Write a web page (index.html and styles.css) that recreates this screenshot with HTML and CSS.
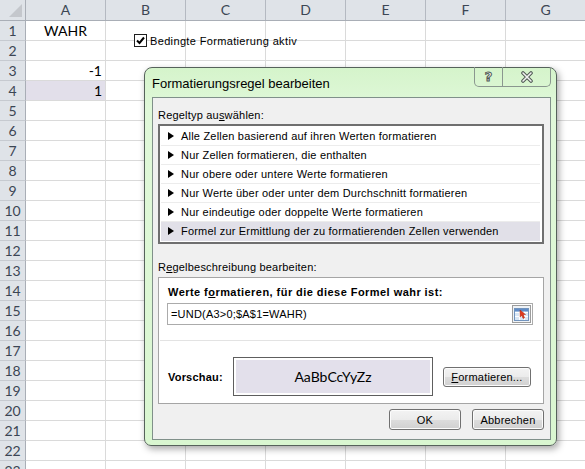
FILE: index.html
```html
<!DOCTYPE html>
<html lang="de">
<head>
<meta charset="utf-8">
<title>Formatierungsregel bearbeiten</title>
<link rel="stylesheet" href="styles.css">
</head>
<body>
<div class="app">
  <div class="sheet">
    <div class="colhead">
      <div class="corner"><span class="tri"></span></div>
      <div class="ch">A</div><div class="ch">B</div><div class="ch">C</div><div class="ch">D</div><div class="ch">E</div><div class="ch">F</div><div class="ch">G</div>
    </div>
    <div class="row"><div class="rh">1</div><div class="ca center">WAHR</div><div class="rest"></div></div>
    <div class="row"><div class="rh">2</div><div class="ca"></div><div class="rest"></div></div>
    <div class="row"><div class="rh">3</div><div class="ca right">-1</div><div class="rest"></div></div>
    <div class="row"><div class="rh">4</div><div class="ca right hl">1</div><div class="rest"></div></div>
    <div class="row"><div class="rh">5</div><div class="ca"></div><div class="rest"></div></div>
    <div class="row"><div class="rh">6</div><div class="ca"></div><div class="rest"></div></div>
    <div class="row"><div class="rh">7</div><div class="ca"></div><div class="rest"></div></div>
    <div class="row"><div class="rh">8</div><div class="ca"></div><div class="rest"></div></div>
    <div class="row"><div class="rh">9</div><div class="ca"></div><div class="rest"></div></div>
    <div class="row"><div class="rh">10</div><div class="ca"></div><div class="rest"></div></div>
    <div class="row"><div class="rh">11</div><div class="ca"></div><div class="rest"></div></div>
    <div class="row"><div class="rh">12</div><div class="ca"></div><div class="rest"></div></div>
    <div class="row"><div class="rh">13</div><div class="ca"></div><div class="rest"></div></div>
    <div class="row"><div class="rh">14</div><div class="ca"></div><div class="rest"></div></div>
    <div class="row"><div class="rh">15</div><div class="ca"></div><div class="rest"></div></div>
    <div class="row"><div class="rh">16</div><div class="ca"></div><div class="rest"></div></div>
    <div class="row"><div class="rh">17</div><div class="ca"></div><div class="rest"></div></div>
    <div class="row"><div class="rh">18</div><div class="ca"></div><div class="rest"></div></div>
    <div class="row"><div class="rh">19</div><div class="ca"></div><div class="rest"></div></div>
    <div class="row"><div class="rh">20</div><div class="ca"></div><div class="rest"></div></div>
    <div class="row"><div class="rh">21</div><div class="ca"></div><div class="rest"></div></div>
    <div class="row"><div class="rh">22</div><div class="ca"></div><div class="rest"></div></div>
    <div class="row"><div class="rh">23</div><div class="ca"></div><div class="rest"></div></div>
  </div>

  <label class="cb">
    <span class="cb-box">
      <svg width="11" height="11" viewBox="0 0 11 11"><path d="M2 5.5 L4.5 8 L9 2.5" fill="none" stroke="#000" stroke-width="2"/></svg>
    </span>
    <span>Bedingte Formatierung aktiv</span>
  </label>

  <div class="dialog">
    <div class="titlebar">
      <div class="title">Formatierungsregel bearbeiten</div>
      <div class="tbtns">
        <div class="tb help"><span class="qmark">?</span></div>
        <div class="tb close">
          <svg width="14" height="12" viewBox="0 0 14 12"><path d="M3 2 L11 10 M11 2 L3 10" stroke="#505a55" stroke-width="3.6" stroke-linecap="round"/><path d="M3 2 L11 10 M11 2 L3 10" stroke="#f2f2f2" stroke-width="1.6" stroke-linecap="round"/></svg>
        </div>
      </div>
    </div>
    <div class="content">
      <div class="label first">Regeltyp au<u>s</u>wählen:</div>
      <div class="list">
        <div class="item"><svg class="arr" width="6" height="8" viewBox="0 0 6 8"><path d="M0 0 L6 4 L0 8 Z"/></svg>Alle Zellen basierend auf ihren Werten formatieren</div>
        <div class="item"><svg class="arr" width="6" height="8" viewBox="0 0 6 8"><path d="M0 0 L6 4 L0 8 Z"/></svg>Nur Zellen formatieren, die enthalten</div>
        <div class="item"><svg class="arr" width="6" height="8" viewBox="0 0 6 8"><path d="M0 0 L6 4 L0 8 Z"/></svg>Nur obere oder untere Werte formatieren</div>
        <div class="item"><svg class="arr" width="6" height="8" viewBox="0 0 6 8"><path d="M0 0 L6 4 L0 8 Z"/></svg>Nur Werte über oder unter dem Durchschnitt formatieren</div>
        <div class="item"><svg class="arr" width="6" height="8" viewBox="0 0 6 8"><path d="M0 0 L6 4 L0 8 Z"/></svg>Nur eindeutige oder doppelte Werte formatieren</div>
        <div class="item sel"><svg class="arr" width="6" height="8" viewBox="0 0 6 8"><path d="M0 0 L6 4 L0 8 Z"/></svg>Formel zur Ermittlung der zu formatierenden Zellen verwenden</div>
      </div>
      <div class="label second">R<u>e</u>gelbeschreibung bearbeiten:</div>
      <div class="desc">
        <div class="heading">Werte f<u>o</u>rmatieren, für die diese Formel wahr ist:</div>
        <div class="formula">
          <span class="ftext">=UND(A3&gt;0;$A$1=WAHR)</span>
          <span class="refbtn">
            <svg width="15" height="13" viewBox="0 0 15 13">
              <rect x="0.5" y="0.5" width="14" height="12" fill="#d9e6f4" stroke="#7193bd"/>
              <path d="M1 4.5h13M1 8.5h13M5.5 1v11M10.5 1v11" stroke="#ffffff"/>
              <rect x="1" y="1" width="13" height="2.5" fill="#5f8cc7"/>
              <path d="M6 2 L11.5 6.5 L9.2 6.8 L10.6 9.8 L9.1 10.5 L7.8 7.5 L6.2 9 Z" fill="#e2391c" stroke="#a52410" stroke-width="0.5"/>
            </svg>
          </span>
        </div>
        <div class="sep"></div>
        <div class="preview-row">
          <div class="pv-label">Vorschau:</div>
          <div class="preview"><div class="pv-fill">AaBbCcYyZz</div></div>
          <button class="btn fmt" type="button"><u>F</u>ormatieren...</button>
        </div>
      </div>
      <div class="footer">
        <button class="btn" type="button">OK</button>
        <button class="btn" type="button">Abbrechen</button>
      </div>
    </div>
  </div>
</div>
</body>
</html>
```

FILE: styles.css
```css
* { box-sizing: border-box; }

html, body {
  margin: 0;
  padding: 0;
  background: #ffffff;
}

.app {
  position: relative;
  width: 585px;
  height: 469px;
  overflow: hidden;
  font-family: "Liberation Sans", Arial, sans-serif;
}

/* ---------- spreadsheet ---------- */
.sheet {
  width: 586px;
}

.colhead {
  display: grid;
  grid-template-columns: 26px repeat(7, 80px);
  height: 21px;
  background: #dfe3e8;
  border-bottom: 1px solid #a9aeb6;
}

.corner {
  position: relative;
  border-right: 1px solid #a9aeb6;
}

.tri {
  position: absolute;
  right: 3px;
  bottom: 3px;
  width: 0;
  height: 0;
  border-left: 13px solid transparent;
  border-bottom: 13px solid #c4c7cc;
}

.ch {
  border-right: 1px solid #b4b9c1;
  font-family: Lato, "Liberation Sans", sans-serif;
  font-size: 14px;
  line-height: 20px;
  color: #3c4654;
  text-align: center;
}

.row {
  display: grid;
  grid-template-columns: 26px 80px 1fr;
  height: 20px;
}

.rh {
  background: #dfe3e8;
  border-right: 1px solid #a9aeb6;
  border-bottom: 1px solid #c6cad0;
  font-family: Lato, "Liberation Sans", sans-serif;
  font-size: 14px;
  line-height: 19px;
  color: #3c4654;
  text-align: center;
}

.ca {
  border-right: 1px solid #dadada;
  border-bottom: 1px solid #dadada;
  font-family: Lato, "Liberation Sans", sans-serif;
  font-size: 14px;
  line-height: 19px;
  color: #000;
  padding: 0 3px;
}

.ca.center { text-align: center; }
.ca.right { text-align: right; }
.ca.hl { background: #e2dfea; }

.rest {
  border-bottom: 1px solid #dadada;
  background-image: repeating-linear-gradient(to right, transparent 0 79px, #dadada 79px 80px);
}

/* ---------- floating checkbox control ---------- */
.cb {
  position: absolute;
  left: 134px;
  top: 34px;
  display: flex;
  align-items: center;
  gap: 3px;
  font-size: 11px;
  letter-spacing: 0.35px;
  color: #000;
}

.cb-box {
  width: 13px;
  height: 13px;
  border: 1px solid #1e1e1e;
  background: #fff;
  display: flex;
  align-items: center;
  justify-content: center;
}

/* ---------- dialog window ---------- */
.dialog {
  position: absolute;
  left: 144px;
  top: 67px;
  width: 413px;
  height: 379px;
  display: flex;
  flex-direction: column;
  padding: 0 5px 5px 7px;
  border: 1px solid #56625b;
  border-radius: 8px 8px 7px 7px;
  background: linear-gradient(to bottom, #d5f4cb 0, #e0f8d9 40px, #d9f6d0 100%);
  box-shadow: 2px 3px 7px rgba(0, 0, 0, 0.35);
}

.titlebar {
  height: 29px;
  display: flex;
  justify-content: space-between;
  align-items: flex-start;
}

.title {
  font-size: 13px;
  line-height: 31px;
  color: #000;
}

.tbtns {
  display: flex;
  height: 20px;
  margin-top: -1px;
  border: 1px solid #8a978f;
  border-top: none;
  border-radius: 0 0 5px 5px;
}

.tb {
  display: flex;
  align-items: center;
  justify-content: center;
}

.tb.help {
  width: 28px;
  border-right: 1px solid #8a978f;
}

.tb.close {
  width: 47px;
}

.qmark {
  font-family: "DejaVu Sans", sans-serif;
  font-weight: bold;
  font-size: 13px;
  line-height: 13px;
  color: #f2f2f2;
  -webkit-text-stroke: 1px #505a55;
}

.content {
  flex: 1;
  border: 1px solid #80908a;
  background: #f0f0f0;
  padding: 0 6px 0 5px;
  font-size: 11px;
  letter-spacing: 0.2px;
  color: #000;
}

.label {
  line-height: 14px;
}

.label.first { margin-top: 10px; }
.label.second { margin-top: 16px; }

.list {
  margin-top: 2px;
  height: 120px;
  border: 2px solid #6f6f6f;
  background: #fff;
  padding: 1px 2px 1px 1px;
}

.item {
  height: 19px;
  display: flex;
  align-items: center;
  gap: 7px;
  padding-left: 7px;
  border-bottom: 1px solid #ececec;
  white-space: nowrap;
}

.item.sel {
  background: #e1e0e8;
  border-bottom-color: #e1e0e8;
}

.arr { fill: #000; flex: none; }

.desc {
  margin-top: 3px;
  height: 127px;
  border: 1px solid #a5a5a5;
  background: #fff;
  padding: 7px 10px 6px 9px;
}

.heading {
  font-weight: bold;
  line-height: 14px;
  letter-spacing: 0.45px;
  white-space: nowrap;
}

.formula {
  margin: 4px 0 0 -1px;
  height: 22px;
  border: 1px solid #ababab;
  display: flex;
  align-items: center;
  justify-content: space-between;
  padding: 0 1px 0 3px;
}

.refbtn {
  width: 19px;
  height: 18px;
  border: 1px solid #9c9c9c;
  background: #eef2f6;
  display: flex;
  align-items: center;
  justify-content: center;
}

.sep {
  margin: 15px -8px 0 -8px;
  height: 1px;
  background: #e3e3e3;
}

.preview-row {
  margin-top: 16px;
  display: flex;
  align-items: center;
}

.pv-label {
  width: 65px;
  font-weight: bold;
}

.preview {
  width: 200px;
  height: 39px;
  border: 1px solid #5e5e5e;
  padding: 2px;
  background: #fff;
}

.pv-fill {
  height: 100%;
  background: #e3e0eb;
  display: flex;
  align-items: center;
  justify-content: center;
  font-family: Lato, "Liberation Sans", sans-serif;
  font-size: 14px;
  letter-spacing: 0;
  color: #000;
}

.btn {
  height: 21px;
  width: 72px;
  padding: 0;
  border: 1px solid #707070;
  border-radius: 3px;
  background: linear-gradient(to bottom, #f3f3f3 0, #ebebeb 50%, #dddddd 51%, #d0d0d0 100%);
  box-shadow: inset 0 0 0 1px #fcfcfc;
  font-family: "Liberation Sans", Arial, sans-serif;
  font-size: 11px;
  letter-spacing: 0.2px;
  color: #000;
}

.btn.fmt {
  width: 88px;
  height: 20px;
  margin-left: 10px;
}

.footer {
  margin-top: 5px;
  display: flex;
  justify-content: flex-end;
  gap: 11px;
}
```
